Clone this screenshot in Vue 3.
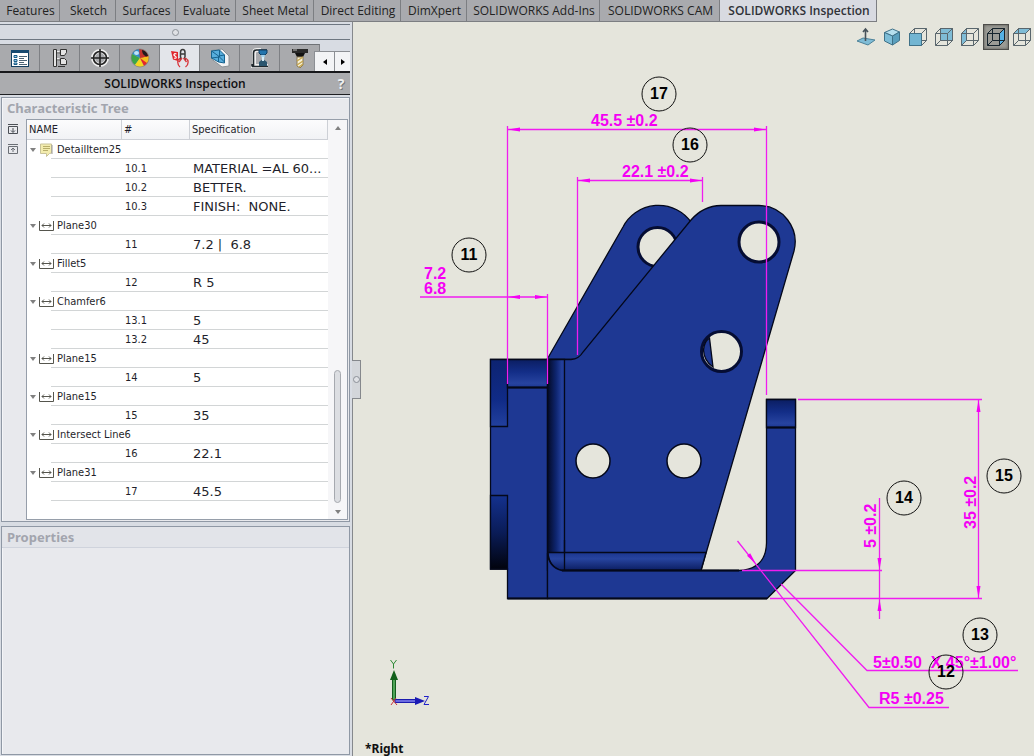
<script setup>
import { ref } from 'vue'

const tabs = ['Features', 'Sketch', 'Surfaces', 'Evaluate', 'Sheet Metal', 'Direct Editing', 'DimXpert', 'SOLIDWORKS Add-Ins', 'SOLIDWORKS CAM', 'SOLIDWORKS Inspection']
const activeTab = ref('SOLIDWORKS Inspection')

const panes = ['Feature tree', 'Property manager', 'DimXpert manager', 'Display manager', 'Inspection', 'CAM feature tree', 'CAM operation tree', 'CAM tools']
const activePane = ref('Inspection')

const views = ['Normal to', 'Isometric', 'Front', 'Back', 'Left', 'Right', 'Top']
const activeView = ref('Right')

const groups = [
  { name: 'DetailItem25', note: true, rows: [['10.1', 'MATERIAL =AL 60...'], ['10.2', 'BETTER.'], ['10.3', 'FINISH:  NONE.']] },
  { name: 'Plane30', rows: [['11', '7.2 |  6.8']] },
  { name: 'Fillet5', rows: [['12', 'R 5']] },
  { name: 'Chamfer6', rows: [['13.1', '5'], ['13.2', '45']] },
  { name: 'Plane15', rows: [['14', '5']] },
  { name: 'Plane15', rows: [['15', '35']] },
  { name: 'Intersect Line6', rows: [['16', '22.1']] },
  { name: 'Plane31', rows: [['17', '45.5']] },
]

const balloons = [
  { n: 17, x: 659, y: 94 },
  { n: 16, x: 690, y: 145 },
  { n: 11, x: 469, y: 255 },
  { n: 15, x: 1004, y: 476 },
  { n: 14, x: 904, y: 498 },
  { n: 13, x: 980, y: 635 },
  { n: 12, x: 946, y: 672 },
]
</script>

<template>
  <div class="app">
    <nav class="tabs">
      <button v-for="t in tabs" :key="t" type="button" :class="{ active: t === activeTab }" @click="activeTab = t">{{ t }}</button>
    </nav>

    <div class="body">
      <aside class="panel">
        <div class="grip"><i class="dot"></i></div>

        <div class="panes">
          <button v-for="p in panes" :key="p" type="button" class="pane" :class="{ active: p === activePane }" :aria-label="p" @click="activePane = p">
            <svg v-if="p === 'Feature tree'" width="20" height="20" viewBox="0 0 20 20">
              <rect x="1.5" y="2.5" width="17" height="16" fill="#fff" stroke="#123f60" />
              <path d="M1 3.500h18" stroke="#174a70" stroke-width="3" />
              <path d="M4 7.500h3v2H4zM4 11.500h3v2H4zM4 15h3v1.500H4z" fill="#9dd2ef" stroke="#1d5e88" />
              <path d="M9 8.500h8M9 10.500h5M9 12.500h8M9 14.500h5M9 16.500h8" stroke="#4d6576" />
            </svg>
            <svg v-else-if="p === 'Property manager'" width="20" height="20" viewBox="0 0 20 20" fill="#e4e4e4" stroke="#333">
              <path d="M4.500 1.500v17M4.500 4.500h5M4.500 11.500h5" fill="none" stroke="#eee" stroke-width="3" />
              <path d="M3.500 1.500h3v17h-3zM6.500 5h4M6.500 12h4" />
              <path d="M10.500 1.500h6v3l-2 3h-4zM10.500 10.500h4l2 2v4h-6z" />
              <path d="M8 18.500h7" />
            </svg>
            <svg v-else-if="p === 'DimXpert manager'" width="20" height="20" viewBox="0 0 20 20" fill="none">
              <circle cx="10" cy="10" r="7" stroke="#f1f1f1" stroke-width="4" />
              <circle cx="10" cy="10" r="6.500" stroke="#222" stroke-width="1.700" />
              <path d="M10 1v18M1 10h18" stroke="#222" stroke-width="1.600" />
            </svg>
            <svg v-else-if="p === 'Display manager'" width="20" height="20" viewBox="0 0 20 20">
              <path d="M10 10L2 6A9 9 0 0 1 11 1z" fill="#2c8fd0" />
              <path d="M10 10L5 17A9 9 0 0 1 2 6z" fill="#3da548" />
              <path d="M10 10L14 18A9 9 0 0 1 5 17z" fill="#f4d91d" />
              <path d="M10 10L18 7A9 9 0 0 1 14 18z" fill="#e5272a" />
              <path d="M10 10L19 8A9 9 0 0 1 17 15z" fill="#f5c01b" />
              <path d="M10 10L9 1A9 9 0 0 1 18.500 8z" fill="#c3322c" />
              <path d="M12 2q5 1 6 6l-2 .5q-4-2-4-6.500z" fill="#211a1c" />
              <ellipse cx="6.500" cy="5" rx="2.500" ry="2" fill="#bfe3f6" />
              <circle cx="10" cy="10" r="9" fill="none" stroke="#777" stroke-width=".6" />
            </svg>
            <svg v-else-if="p === 'Inspection'" width="20" height="20" viewBox="0 0 20 20" fill="none">
              <path d="M1 3l7 1v9l-5-1.500z" fill="#e0252b" />
              <path d="M6.500 6C4 5 3 7 5 8s1.500 3-1 2" stroke="#fff" stroke-width="1.200" />
              <path d="M10.500 9V4.500c0-4 4.500-4 4.500 0V9M10.500 6H15M11 9l-1 3M14.500 9l1 3" stroke="#3b3b3b" stroke-width="1.500" />
              <path d="M10 10c-3 2-3 6 0 9M15.500 10c3.500 2 3.500 6 0 9M9 14l3-4M16.500 14l-3-4" stroke="#d8343a" stroke-width="1.300" />
            </svg>
            <svg v-else-if="p === 'CAM feature tree'" width="20" height="20" viewBox="0 0 20 20" stroke-linejoin="round">
              <path d="M1.500 2.500L12 1l7 7v10l-7 1L1.500 11z" fill="#f4f4f4" stroke="#8c9296" />
              <path d="M1.500 3l8-1 5 5v8l-6-1-7-4z" fill="#58aedd" stroke="#17638f" />
              <path d="M9.500 2v7l5 5M1.500 10l8-1M1.500 3l7 5v6M8.500 8l6-1" fill="none" stroke="#17638f" />
            </svg>
            <svg v-else-if="p === 'CAM operation tree'" width="20" height="20" viewBox="0 0 20 20">
              <path d="M4 18V5q0-3 3-3h4M1 18h17" stroke="#eee" stroke-width="4" fill="none" />
              <path d="M3.500 18V5q0-3 3-3H17M2 18.500h16M2 16v2.500" fill="none" stroke="#20282d" stroke-width="1.600" />
              <path d="M9 2h8v3l-2 2h-4L9 5z" fill="#2475ad" stroke="#123f60" />
              <path d="M11 7h4l-1 4h-2z" fill="#a7d7ef" />
              <path d="M13 11l4 3v4H9v-4z" fill="#2b566f" />
              <path d="M12 9h2v4h-2z" fill="#d7eef9" />
            </svg>
            <svg v-else width="20" height="20" viewBox="0 0 20 20">
              <path d="M2 1h16v4H2z" fill="#2a2a2a" />
              <path d="M5 5h10l-2 4H7z" fill="#111" />
              <path d="M3 2h4" stroke="#bbb" />
              <path d="M7 9h6v8l-3 3-3-2z" fill="#f7f2d7" stroke="#8a7952" />
              <path d="M7 13l6-4M7 17l6-4M9 19l4-3" stroke="#c5a64f" stroke-width="1.500" />
            </svg>
          </button>
          <div class="scrollers">
            <button type="button" aria-label="Scroll left"><i class="tri left"></i></button>
            <button type="button" aria-label="Scroll right"><i class="tri right"></i></button>
          </div>
        </div>

        <header class="title">
          <h1>SOLIDWORKS Inspection</h1>
          <button type="button" class="help">?</button>
        </header>

        <section class="box tree">
          <h2>Characteristic Tree</h2>
          <div class="treebody">
            <div class="tools">
              <button type="button" aria-label="Expand all">
                <svg width="12" height="12" viewBox="0 0 12 12" fill="none" stroke="#4b4f55"><path d="M1 1.500h10M1.500 3.500h9v7h-9zM6 5v4M4 7.500l2 2 2-2" /></svg>
              </button>
              <button type="button" aria-label="Collapse all">
                <svg width="12" height="12" viewBox="0 0 12 12" fill="none" stroke="#6b6f75"><path d="M1 1.500h10M1.500 3.500h9v7h-9zM6 5v4M4 7l2-2 2 2" /></svg>
              </button>
            </div>
            <div class="grid">
              <table>
                <colgroup><col class="c1"><col class="c2"><col></colgroup>
                <thead>
                  <tr><th>NAME</th><th>#</th><th>Specification</th></tr>
                </thead>
                <tbody v-for="(g, i) in groups" :key="i">
                  <tr>
                    <td colspan="3" class="group">
                      <div class="label">
                        <i class="tri down"></i>
                        <svg v-if="g.note" width="15" height="14" viewBox="0 0 15 14"><path d="M1.500 1h11v9l-2 .5-3 3v-3h-6z" fill="#f3ecae" stroke="#c9c39a" /><path d="M4 3.500h7M4 5.500h7M4 7.500h5" stroke="#b8ae6a" /><path d="M13 2v9" stroke="#999" /></svg>
                        <svg v-else width="15" height="14" viewBox="0 0 15 14" fill="none" stroke="#55554d"><path d="M.5 2v9.500h14V2M3 6.500h9M5 4.500l-2 2 2 2M10 4.500l2 2-2 2" /></svg>
                        <span>{{ g.name }}</span>
                      </div>
                    </td>
                  </tr>
                  <tr v-for="r in g.rows" :key="r[0]">
                    <td class="blank"></td>
                    <td class="num">{{ r[0] }}</td>
                    <td class="spec">{{ r[1] }}</td>
                  </tr>
                </tbody>
              </table>
              <div class="scrollbar">
                <i class="tri up"></i>
                <i class="thumb"></i>
                <i class="tri down"></i>
              </div>
            </div>
          </div>
        </section>

        <section class="box props">
          <h2>Properties</h2>
        </section>
        <button type="button" class="handle" aria-label="Collapse panel"><i class="dot"></i></button>
      </aside>

      <main class="canvas">
        <svg class="drawing" viewBox="353 22 681 734" preserveAspectRatio="xMinYMin meet">
          <defs>
            <linearGradient id="bend" x1="0" y1="0" x2="0" y2="1">
              <stop offset="0" stop-color="#0b1e62" /><stop offset=".45" stop-color="#132e88" /><stop offset=".85" stop-color="#27439f" /><stop offset="1" stop-color="#1c3792" />
            </linearGradient>
            <linearGradient id="bore" x1="0" y1="0" x2="0" y2="1">
              <stop offset="0" stop-color="#14318e" /><stop offset=".5" stop-color="#0a1c58" /><stop offset="1" stop-color="#01030d" />
            </linearGradient>
            <linearGradient id="boss" x1="0" y1="0" x2="0" y2="1">
              <stop offset="0" stop-color="#0d2371" /><stop offset=".6" stop-color="#102b87" /><stop offset="1" stop-color="#22409e" />
            </linearGradient>
            <linearGradient id="fillet" x1="0" y1="0" x2="1" y2="0">
              <stop offset="0" stop-color="#030924" /><stop offset=".5" stop-color="#0e256f" /><stop offset=".85" stop-color="#24409d" /><stop offset="1" stop-color="#1c3792" />
            </linearGradient>
            <linearGradient id="floor" x1="0" y1="0" x2="0" y2="1">
              <stop offset="0" stop-color="#1b3690" /><stop offset=".35" stop-color="#27449f" /><stop offset="1" stop-color="#0b1d61" />
            </linearGradient>
            <path id="arrow" d="M0 0L12 -2V2z" />
          </defs>

          <g class="part">
            <path d="M547 359.500L623 227A40 40 0 0 1 691 222L640 320L576 359.500z" />
            <circle class="ring" cx="657.500" cy="247" r="19.500" />
            <path d="M547.500 359.500H571Q579 359 583 352L691 220Q703 206 721 205.500H759A36.500 36.500 0 0 1 794 251L701 570.500H547.500z" />
            <circle class="ring" cx="759" cy="242" r="20" />
            <circle class="ring" cx="721.500" cy="351.500" r="20" />
            <path d="M709.500 338L713 367Q704 361 703.500 350Q704 342 709.500 338z" />
            <circle class="hole" cx="593" cy="461" r="17" />
            <circle class="hole" cx="684" cy="461" r="17" />
            <path d="M490.500 359.500H547.500V598.500H507.500V569H490.500z" />
            <path d="M490.500 359.500H507.500V426.500H490.500z" fill="url(#boss)" />
            <path d="M490.500 495.500H507.500V569H490.500z" fill="url(#bore)" />
            <path d="M507.500 359.500H547.500V387.500H507.500z" fill="url(#bend)" />
            <path d="M507.500 387.500H547.500" stroke-width="2" />
            <path d="M547.500 359.500H564.500V570H547.500z" fill="url(#fillet)" />
            <path d="M548 552.500H706L701 570.500H562Q549 567 548 552.500z" fill="url(#floor)" />
            <path d="M564.500 540V570" />
            <path d="M547.500 598.500V553Q549 568 562 570.500H739Q766 569 766.500 543V399.500H795.500V570.500L767 598.500z" />
            <path d="M507.500 598.500H767" stroke-width="2" />
            <path d="M766.500 399.500H795.500V427.500H766.500z" fill="url(#bend)" />
            <path d="M766.500 427.500H795.500M562 570.500H739" stroke-width="2" />
          </g>

          <g class="dims">
            <path d="M507.500 126V384M766.500 126V395M508 129.500H766M577.500 177V355M702.500 177V202M577 180.500H703M420 297H547M547.500 294V384" />
            <path d="M879.500 498V619M742 570.500H882M770 598.500H982M798 399.500H982M978.500 400V598" />
            <path d="M737.500 541L869 707.500H949M781 584L867 670.500H1018" />
            <g class="heads">
              <use href="#arrow" transform="translate(508 129.500)" />
              <use href="#arrow" transform="translate(766 129.500) rotate(180)" />
              <use href="#arrow" transform="translate(578 180.500)" />
              <use href="#arrow" transform="translate(702 180.500) rotate(180)" />
              <use href="#arrow" transform="translate(508 297)" />
              <use href="#arrow" transform="translate(547 297) rotate(180)" />
              <use href="#arrow" transform="translate(978.500 400) rotate(90)" />
              <use href="#arrow" transform="translate(978.500 598) rotate(-90)" />
              <use href="#arrow" transform="translate(879.500 570) rotate(-90)" />
              <use href="#arrow" transform="translate(879.500 599) rotate(90)" />
              <use href="#arrow" transform="translate(756 564) rotate(-128)" />
            </g>
            <text x="591" y="126">45.5 ±0.2</text>
            <text x="622" y="177">22.1 ±0.2</text>
            <text x="424" y="279">7.2</text>
            <text x="424" y="294">6.8</text>
            <text transform="translate(876 548) rotate(-90)">5 ±0.2</text>
            <text transform="translate(976 529) rotate(-90)">35 ±0.2</text>
            <text x="873" y="668">5±0.50&nbsp; X 45°±1.00°</text>
            <text x="879" y="704">R5 ±0.25</text>
          </g>

          <g v-for="b in balloons" :key="b.n" class="balloon">
            <circle :cx="b.x" :cy="b.y" r="17" />
            <text :x="b.x" :y="b.y + 5">{{ b.n }}</text>
          </g>

          <g class="triad">
            <path d="M392.500 678h3v22h-3z" fill="#4fa457" stroke="#155c1d" />
            <path d="M394 670L398 680H390z" fill="#12601b" />
            <path d="M395 699.500h21v3h-21z" fill="#6a6ae0" stroke="#1c1cae" />
            <path d="M425 701L415 697V705z" fill="#1a1ab4" />
            <path d="M391 698L397 705M396 698L391 705" stroke="#c8323c" />
            <path d="M390.500 660L393.500 664L396.500 660M393.500 664V668.500" fill="none" stroke="#2c8a34" />
            <path d="M424 696.500H428.500L424 704.500H429" fill="none" stroke="#2020c8" />
          </g>
          <text class="viewname" x="365" y="753">*Right</text>
        </svg>

        <div class="views">
          <button v-for="v in views" :key="v" type="button" :aria-label="v" :class="{ active: v === activeView }" @click="activeView = v">
            <svg v-if="v === 'Normal to'" width="20" height="20" viewBox="0 0 20 20"><path d="M1 14l6-3 12 2-7 5z" fill="#7fbcd6" stroke="#4d8299" /><path d="M9.500 14V3M7 5l2.500-3L12 5" fill="none" stroke="#47525a" stroke-width="1.600" /></svg>
            <svg v-else-if="v === 'Isometric'" width="20" height="20" viewBox="0 0 20 20" stroke="#3f7188" stroke-linejoin="round"><path d="M2.500 5.500L10.500 2l7 3-7 4z" fill="#b6dfee" /><path d="M2.500 5.500l8 3.500v9l-8-4z" fill="#7dbdd7" /><path d="M10.500 9l7-4v8.500l-7 4.500z" fill="#5a9fbd" /></svg>
            <svg v-else width="20" height="20" viewBox="0 0 20 20" fill="none" stroke-linejoin="round" :stroke="v === 'Right' ? '#16242d' : '#59666d'">
              <path v-if="v === 'Back'" d="M6.500 1.500h12v12h-12z" fill="#7fbcd6" />
              <path v-if="v === 'Left'" d="M1.500 6.500l5-5v12l-5 5z" fill="#7fbcd6" />
              <path v-if="v === 'Right'" d="M13.500 6.500l5-5v12l-5 5z" fill="#55b1e4" />
              <path v-if="v === 'Top'" d="M1.500 6.500l5-5h12l-5 5z" fill="#7fbcd6" />
              <path d="M6.500 1.500h12v12h-12zM1.500 6.500h12v12h-12zM1.500 6.500l5-5M13.500 6.500l5-5M13.500 18.500l5-5M1.500 18.500l5-5" />
              <path v-if="v === 'Front'" d="M1.500 6.500h12v12h-12z" fill="#72b5d2" stroke="#3f7188" />
            </svg>
          </button>
        </div>
      </main>
    </div>
  </div>
</template>

<style>
body { margin: 0; background: #e5e5dc; }
</style>

<style scoped>
* { box-sizing: border-box; }
button { margin: 0; padding: 0; border: 0; background: none; font: inherit; color: inherit; }
svg { display: block; flex: none; }
.app { min-height: 100vh; display: flex; flex-direction: column; background: #e5e5dc; font-family: "DejaVu Sans Condensed", "DejaVu Sans", sans-serif; font-size: 11px; color: #1f1f2b; }

.tabs { height: 22px; display: grid; grid-template-columns: 60px 56px 60px 60px 78px 87px 66px 133px 120px 157px; font-family: "Open Sans", sans-serif; font-size: 12px; color: #222; }
.tabs button { padding-left: 2px; background: #a9aaae; border-right: 1px solid #7c7e82; border-bottom: 1px solid #7c7e82; white-space: nowrap; }
.tabs button.active { background: #d8dae1; font-weight: 600; color: #303238; }

.body { flex: 1; display: flex; }
.panel { position: relative; width: 353px; flex: none; display: flex; flex-direction: column; padding: 2px 2px 1px 0; background: #d8dce3; border-right: 1px solid #85888c; }
.grip { height: 16px; display: grid; place-items: center; border-top: 1px solid #6d7681; border-bottom: 1px solid #6d7681; background: #d6dae1; }
.dot { width: 7px; height: 7px; border: 1px solid #8b9097; border-radius: 50%; background: #dfe1e5; }

.panes { height: 29px; margin-top: 4px; padding-right: 30px; position: relative; display: flex; border-bottom: 2px solid #17181b; }
.pane { width: 40px; display: grid; place-items: center; background: #a9aaad; border-top: 1px solid #6f7276; border-right: 1px solid #7e8084; }
.pane.active { background: #e3e5ea; }
.scrollers { position: absolute; right: 0; top: 7px; bottom: 0; display: flex; border-top: 1px solid #8c8f94; border-left: 1px solid #8c8f94; }
.scrollers button { width: 19px; display: grid; place-items: center; background: #f3f4f6; }
.scrollers button + button { width: 16px; border-left: 1px solid #8c8f94; }

.tri { width: 0; height: 0; border: 4px solid transparent; }
.tri.left { border-width: 3px 4px 3px 0; border-right-color: #000; }
.tri.right { border-width: 3px 0 3px 4px; border-left-color: #000; }
.tri.down { border-width: 4px 3px 0; border-top-color: #808080; }
.tri.up { border-width: 0 3px 4px; border-bottom-color: #808080; }

.title { height: 22px; display: flex; align-items: center; background: #abacaf; border-bottom: 1px solid #1d1e21; }
.title h1 { flex: 1; margin: 0; text-align: center; font: 600 12px/20px "Open Sans", sans-serif; color: #0e0e10; }
.help { width: 18px; margin-left: -18px; font: 700 14px/20px "Open Sans", sans-serif; color: #eff0f2; text-shadow: 1px 1px 0 #77797d; }

.box { margin-left: 1px; border: 1px solid #8f98a5; background: #e8e9ed; box-shadow: inset 1px 1px 0 #f4f5f8; }
.box h2 { margin: 0; padding-left: 5px; font: 700 13px/20px "Noto Sans", sans-serif; color: #a2a5ae; }
.tree { margin-top: 2px; }
.treebody { display: flex; padding: 1px 1px 1px 0; }
.tools { width: 24px; padding: 4px 2px 0 0; display: flex; flex-direction: column; align-items: center; gap: 8px; }
.grid { flex: 1; display: flex; height: 401px; border: 1px solid #969eaa; background: #fff; }
table { flex: 1; align-self: flex-start; border-collapse: separate; border-spacing: 0; table-layout: fixed; width: 100%; }
.c1 { width: 95px; }
.c2 { width: 68px; }
th { height: 20px; padding: 0 0 0 2px; text-align: left; font-weight: 400; background: linear-gradient(#fcfcfd, #f1f2f5); border-right: 1px solid #cdd0d6; border-bottom: 1px solid #cdd0d6; }
td { height: 19px; padding: 0; white-space: pre; background: linear-gradient(#d2d5d6, #d2d5d6) right bottom / 100% 1px no-repeat; }
td.group, td.blank { background-size: calc(100% - 24px) 1px; }
.group .label { display: flex; align-items: center; height: 18px; gap: 3px; padding-left: 3px; }
.num { padding-left: 3px; }
.spec { padding-left: 3px; font: 13px/18px "DejaVu Sans", sans-serif; }
.scrollbar { width: 19px; padding: 6px 0 5px; display: flex; flex-direction: column; align-items: center; background: #f6f6f8; }
.scrollbar .thumb { width: 7px; height: 133px; margin: auto 0 7px; border: 1px solid #a6a9af; border-radius: 4px; background: #dcdee2; }
.props { flex: 1; margin-top: 4px; }
.props h2 { border-bottom: 1px solid #cfd3dc; background: #e2e4e9; }
.handle { position: absolute; left: 352px; top: 338px; width: 9px; height: 39px; display: grid; place-items: center; background: #d3d6da; border: 1px solid #85888c; border-left: 0; z-index: 1; }

.canvas { position: relative; flex: 1; min-width: 0; }
.drawing { width: 100%; }
.part { fill: #1e3893; stroke: #04081a; stroke-width: 1.3; }
.part .ring { fill: #e5e5dc; stroke: #050d33; stroke-width: 3; }
.part .hole { fill: #e5e5dc; stroke-width: 1.5; }
.dims { fill: none; stroke: #f01cf0; stroke-width: 1.3; }
.dims text, .dims .heads { fill: #f400f4; stroke: none; }
.dims text { font: 700 16px "Liberation Sans", sans-serif; white-space: pre; }
.balloon circle { fill: none; stroke: #111; }
.balloon text { fill: #000; font: 700 16px "Liberation Sans", sans-serif; text-anchor: middle; }
.viewname { font: 700 12px "Noto Sans", sans-serif; fill: #111; }
.views { position: absolute; top: 2px; right: 0; display: flex; }
.views button { width: 26px; height: 26px; display: grid; place-items: center; }
.views button:last-child { width: 25px; }
.views button.active { background: #9b9b95; border: 1px solid #4d4d4a; box-shadow: inset 0 0 3px #55554f; }
</style>
